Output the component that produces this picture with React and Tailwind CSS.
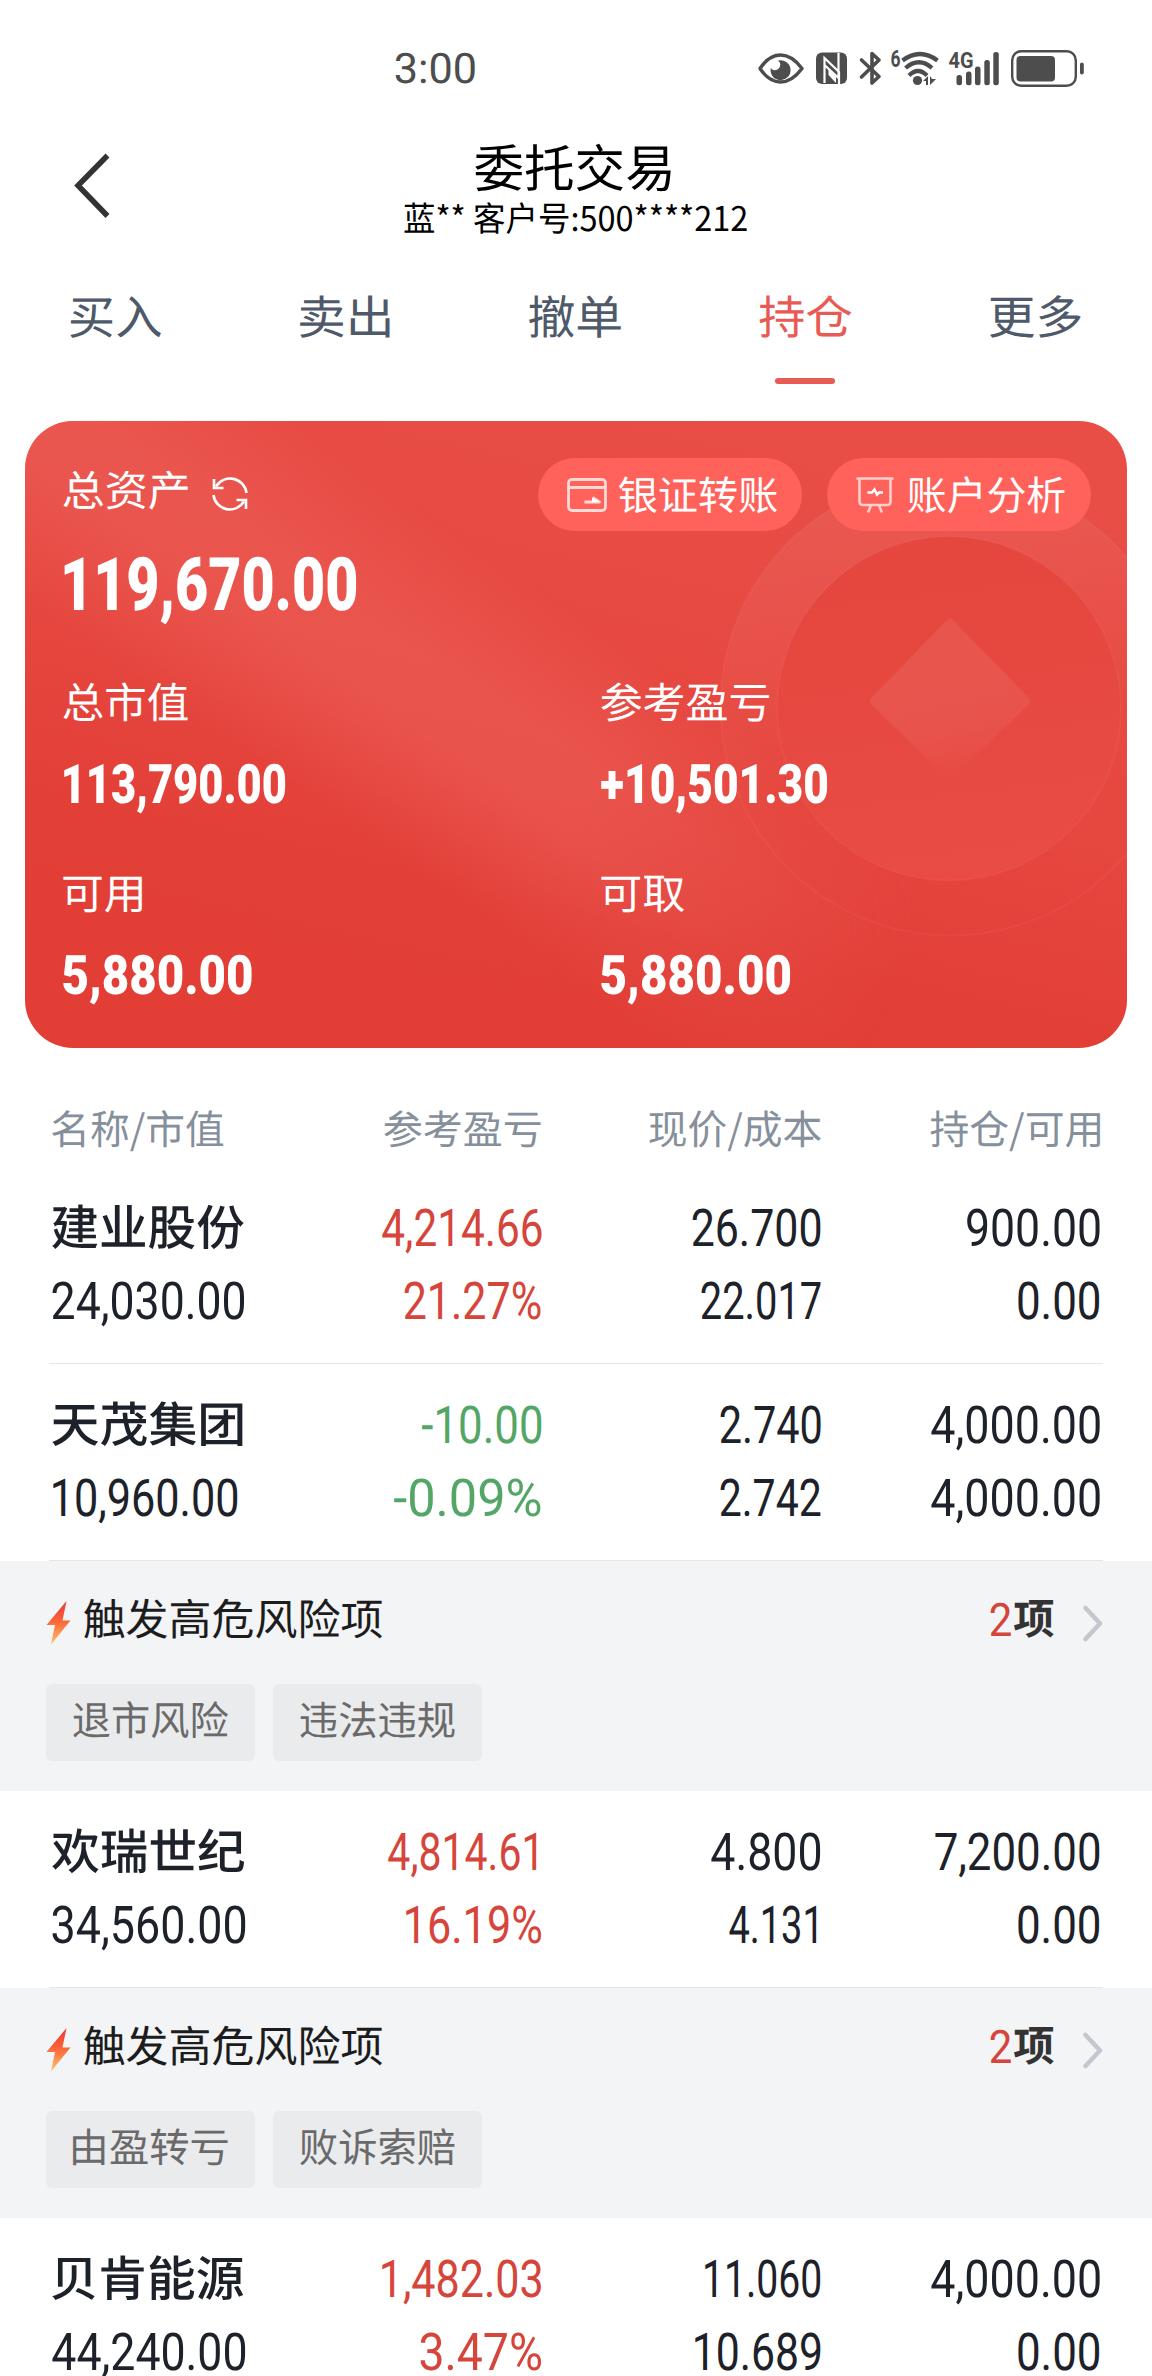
import { useLayoutEffect, useRef } from "react";

const CJK = /[\u4e00-\u9fff]/;

// One line of text, condensed or widened so that its visible glyphs span `w` pixels.
function Fit({ text, w, className = "" }) {
  const ref = useRef(null);
  useLayoutEffect(() => {
    const el = ref.current;
    const cs = getComputedStyle(el);
    const size = parseFloat(cs.fontSize);
    const ctx = document.createElement("canvas").getContext("2d");
    ctx.font = `${cs.fontWeight} ${size * 10}px ${cs.fontFamily}`;
    const m = ctx.measureText(text);
    const left = -m.actualBoundingBoxLeft / 10 - (text.startsWith("1") ? size * 0.025 : 0);
    const right = m.actualBoundingBoxRight / 10 + (text.endsWith("1") ? size * 0.13 : 0);
    const s = w / (right - left);
    const dy = CJK.test(text) ? "-0.06em" : "0.014em";
    el.style.transform = `translate(${-left * s}px, ${dy}) scaleX(${s})`;
  }, [text, w]);
  return (
    <span className={`block shrink-0 ${className}`} style={{ width: w }}>
      <span
        ref={ref}
        className={`block w-max origin-left whitespace-nowrap [text-rendering:geometricPrecision] ${
          CJK.test(text)
            ? "font-['Noto_Sans_CJK_SC',sans-serif]"
            : "font-[Roboto,'Noto_Sans_CJK_SC',sans-serif]"
        }`}
      >
        {text}
      </span>
    </span>
  );
}

function StatusIcons() {
  return (
    <svg className="overflow-visible" width="330" height="40" viewBox="757 48 330 40" fill="#4d4d4d">
      <path d="M760 67.5Q769 54 780.5 54T802 67.5Q792 81 780.5 81T760 67.5Z" fill="none" stroke="#4d4d4d" strokeWidth="3.4" strokeLinejoin="round" />
      <path d="M778 59.5a10 10 0 1 1-7.2 7.5 6 6 0 0 0 3.2 2.3 6.2 6.2 0 0 0 6.4-6 5.500 5.500 0 0 0-2.400-3.800Z" />
      <rect x="816" y="51.500" width="31" height="31.500" rx="6" />
      <path d="M824.500 82V57L839 71V83M838.500 52V77L824.500 64" fill="none" stroke="#fff" strokeWidth="2.200" />
      <path d="M828.500 68.500L836 76v6L828.500 74Z" fill="#fff" />
      <path d="M861.500 59L879 75.500 872 82V52.500L879 59 861.500 76" fill="none" stroke="#4d4d4d" strokeWidth="3.600" strokeLinejoin="round" strokeLinecap="round" />
      <text x="890.500" y="66" fontSize="23" fontWeight="700" fontFamily="Roboto, sans-serif" textLength="10" lengthAdjust="spacingAndGlyphs">6</text>
      <g fill="none" stroke="#4d4d4d" strokeWidth="4.200">
        <path d="M902.500 59.500Q920 46.500 937.500 59.500" />
        <path d="M905.500 67Q919 55.500 932 67" />
        <path d="M909 74.500Q918 65.500 927 74.500" />
      </g>
      <circle cx="917.500" cy="79.500" r="4.600" />
      <path d="M923 80l5-5v9h-2v-4ZM930 75v9l6-6h-4Z" />
      <text x="948.500" y="67" fontSize="22.500" fontWeight="700" fontFamily="Roboto, sans-serif" textLength="25" lengthAdjust="spacingAndGlyphs">4G</text>
      <rect x="956.500" y="74" width="5.500" height="10.300" rx="2.500" />
      <rect x="966" y="70.500" width="5.500" height="13.800" rx="2.500" />
      <rect x="975" y="65.500" width="5.500" height="18.800" rx="2.500" />
      <rect x="984.300" y="59" width="5.500" height="25.300" rx="2.500" />
      <rect x="993.300" y="51" width="5.500" height="33.300" rx="2.500" />
      <rect x="1012.200" y="50.200" width="63.600" height="34.600" rx="9" fill="none" stroke="#4d4d4d" strokeWidth="2.400" />
      <rect x="1016.500" y="55" width="38.500" height="25.500" rx="4" />
      <rect x="1080" y="61.500" width="3.800" height="12" rx="1.900" />
    </svg>
  );
}

function CardBackdrop() {
  return (
    <svg className="absolute inset-0" width="1102" height="627" viewBox="25 421 1102 627" aria-hidden="true">
      <defs>
        <linearGradient id="base" gradientUnits="userSpaceOnUse" x1="700" y1="421" x2="560" y2="1047">
          <stop offset="0" stopColor="#e84e46" />
          <stop offset="0.5" stopColor="#e6473f" />
          <stop offset="0.8" stopColor="#e23f37" />
          <stop offset="1" stopColor="#e23e36" />
        </linearGradient>
        <linearGradient id="beam" gradientUnits="userSpaceOnUse" x1="290" y1="790" x2="465" y2="535">
          <stop offset="0" stopColor="#ed625b" stopOpacity="0" />
          <stop offset="0.4" stopColor="#ed625b" stopOpacity="0.5" />
          <stop offset="0.62" stopColor="#ed625b" stopOpacity="0.5" />
          <stop offset="1" stopColor="#ed625b" stopOpacity="0" />
        </linearGradient>
        <linearGradient id="fade" gradientUnits="userSpaceOnUse" x1="430" y1="610" x2="930" y2="950">
          <stop offset="0" stopColor="#fff" />
          <stop offset="0.4" stopColor="#fff" />
          <stop offset="1" stopColor="#000" />
        </linearGradient>
        <mask id="beamMask">
          <rect x="25" y="421" width="1102" height="627" fill="url(#fade)" />
        </mask>
        <linearGradient id="ring" gradientUnits="userSpaceOnUse" x1="860" y1="480" x2="960" y2="880">
          <stop offset="0" stopColor="#fff" stopOpacity="0.065" />
          <stop offset="0.25" stopColor="#fff" stopOpacity="0.05" />
          <stop offset="0.7" stopColor="#fff" stopOpacity="0" />
        </linearGradient>
        <linearGradient id="disc" gradientUnits="userSpaceOnUse" x1="930" y1="537" x2="970" y2="880">
          <stop offset="0" stopColor="#e5463e" />
          <stop offset="1" stopColor="#e84c44" />
        </linearGradient>
        <linearGradient id="gem" gradientUnits="userSpaceOnUse" x1="940" y1="690" x2="958" y2="778">
          <stop offset="0" stopColor="#fff" stopOpacity="0.07" />
          <stop offset="0.45" stopColor="#fff" stopOpacity="0.055" />
          <stop offset="1" stopColor="#fff" stopOpacity="0" />
        </linearGradient>
      </defs>
      <rect x="25" y="421" width="1102" height="627" fill="url(#base)" />
      <rect x="25" y="421" width="1102" height="627" fill="url(#beam)" mask="url(#beamMask)" />
      <circle cx="950.500" cy="705.500" r="230" fill="url(#ring)" stroke="#fff" strokeOpacity="0.04" strokeWidth="2" />
      <circle cx="949" cy="708.500" r="172" fill="url(#disc)" stroke="#fff" strokeOpacity="0.04" strokeWidth="2" />
      <path d="M947 620q3-3 6 0l75 77q4 4 0 8l-75 73q-3 3-6 0l-75-73q-4-4 0-8Z" fill="url(#gem)" />
    </svg>
  );
}

const CardIcon = () => (
  <svg width="40" height="34" viewBox="0 0 40 34" fill="none" stroke="#ffd9d6" strokeWidth="2.800">
    <rect x="1.500" y="1.500" width="37" height="31" rx="3.500" />
    <path d="M2 9.500h36M17.500 24h15l-7-4.500" strokeLinejoin="round" />
    <path d="M25 19.500l8 4.500h-8Z" fill="#fff" stroke="none" />
  </svg>
);

const BoardIcon = () => (
  <svg width="38" height="38" viewBox="0 0 38 38" fill="none" stroke="#ffcfcc" strokeWidth="2.600">
    <path d="M0.500 2.500h37M3.500 3v22.500q0 3.500 3.500 3.500h24q3.500 0 3.500-3.500V3M15 29.500l-3 7M23 29.500l3 7" />
    <path d="M11.500 16.500h4.500l2.500-3 2.500 5 2-2h4" stroke="#fff" />
  </svg>
);

const RefreshIcon = () => (
  <svg width="36" height="36" viewBox="0 0 36 36" fill="none" stroke="#fff" strokeWidth="2.600">
    <path d="M34.500 17A16.500 16.500 0 0 0 4 10.500M1.500 19A16.500 16.500 0 0 0 32 25.500" />
    <path d="M2 3v9h9.500M34 33v-9h-9.500" />
  </svg>
);

const TABS = [
  { label: "买入", w: 91 },
  { label: "卖出", w: 90 },
  { label: "撤单", w: 92 },
  { label: "持仓", w: 93, active: true },
  { label: "更多", w: 91 },
];

const HEADERS = [
  ["名称/市值", 171.5],
  ["参考盈亏", 157],
  ["现价/成本", 172],
  ["持仓/可用", 170],
];

const STOCKS = [
  {
    name: ["建业股份", 192], value: ["24,030.00", 192.5], tone: "text-[#d5453b]",
    pairs: [[["4,214.66", 159.5], ["21.27%", 137]], [["26.700", 128.5], ["22.017", 120]], [["900.00", 133], ["0.00", 81.5]]],
  },
  {
    name: ["天茂集团", 190.5], value: ["10,960.00", 185.5], tone: "text-[#54a667]",
    pairs: [[["-10.00", 119.5], ["-0.09%", 147]], [["2.740", 101], ["2.742", 100.5]], [["4,000.00", 169], ["4,000.00", 169]]],
    risks: ["退市风险", "违法违规"],
  },
  {
    name: ["欢瑞世纪", 192], value: ["34,560.00", 193.5], tone: "text-[#d5453b]",
    pairs: [[["4,814.61", 153.5], ["16.19%", 136.5]], [["4.800", 109.5], ["4.131", 92]], [["7,200.00", 164.5], ["0.00", 81.5]]],
    risks: ["由盈转亏", "败诉索赔"],
  },
  {
    name: ["贝肯能源", 191.5], value: ["44,240.00", 193.5], tone: "text-[#d5453b]",
    pairs: [[["1,482.03", 160], ["3.47%", 121.5]], [["11.060", 116.5], ["10.689", 126.5]], [["4,000.00", 169], ["0.00", 81.5]]],
  },
];

const COLS = "grid grid-cols-[250px_239.5px_279.5px_279px] pl-[51.500px]";

function StockRow({ stock }) {
  return (
    <div className="h-[197px]">
      <div className={`${COLS} h-[196px] pt-6 text-[52px] leading-[73px] text-[#1d2129]`}>
        <div>
          <Fit text={stock.name[0]} w={stock.name[1]} className="text-[48px] font-medium" />
          <Fit text={stock.value[0]} w={stock.value[1]} />
        </div>
        {stock.pairs.map((pair, i) => (
          <div key={i} className={`flex flex-col items-end ${i === 0 ? stock.tone : ""}`}>
            {pair.map(([t, w], j) => (
              <Fit key={j} text={t} w={w} />
            ))}
          </div>
        ))}
      </div>
      <div className="mx-[49px] h-px bg-[#e6e6e8]" />
    </div>
  );
}

function RiskPanel({ risks }) {
  return (
    <section className="h-[230px] bg-[#f3f4f6] pt-7">
      <div className="flex h-[62px] items-center pr-[49px] pl-[46px] leading-[62px]">
        <svg className="mt-1.5 shrink-0" width="25" height="44" viewBox="0 0 25 44">
          <defs>
            <linearGradient id="bolt" x1="0" y1="0" x2="0" y2="1">
              <stop offset="0" stopColor="#e8383d" />
              <stop offset="0.45" stopColor="#fb6237" />
              <stop offset="1" stopColor="#ffc46b" />
            </linearGradient>
          </defs>
          <path d="M20.500 0L0.500 24h8.500L5 43.500 24.500 19.500h-8Z" fill="url(#bolt)" />
        </svg>
        <Fit text="触发高危风险项" w={298} className="ml-[13px] text-[43px] text-[#1c1c1c]" />
        <div className="ml-auto flex items-center">
          <Fit text="2" w={21} className="text-[46px] text-[#d5453b]" />
          <Fit text="项" w={40} className="ml-[3px] text-[42px] font-bold text-[#333]" />
          <svg className="mt-1.5 ml-7" width="21" height="37" viewBox="0 0 21 37" fill="none">
            <path d="M3.500 3L18 18.500 3.500 34" stroke="#c5c7cf" strokeWidth="4.500" strokeLinecap="round" strokeLinejoin="round" />
          </svg>
        </div>
      </div>
      <div className="mt-[33px] flex gap-[18px] pl-[46px]">
        {risks.map((r) => (
          <div key={r} className="flex h-[77px] w-[209px] justify-center rounded-md bg-[#eaebed] text-[40px] leading-[73px] text-[#6a6a6a]">
            <Fit text={r} w={155} />
          </div>
        ))}
      </div>
    </section>
  );
}

function Metric({ label, lw, value, vw }) {
  return (
    <div className="leading-[80px]">
      <Fit text={label} w={lw} className="text-[42px]" />
      <Fit text={value} w={vw} className="text-[54.500px] font-black" />
    </div>
  );
}

function Pill({ icon, label, w, gap }) {
  return (
    <div className={`flex h-[73px] w-[264px] items-center rounded-full bg-[#ff625a] pl-[29px] leading-[70px] ${gap}`}>
      {icon}
      <Fit text={label} w={w} className="text-[40px]" />
    </div>
  );
}

export default function App() {
  return (
    <div className="h-[2376px] w-[1152px] overflow-hidden bg-white font-['Noto_Sans_CJK_SC',sans-serif]">
      <div className="flex h-[134px] items-center pt-1 pl-[395px] text-[#4d4d4d]">
        <Fit text="3:00" w={80} className="text-[42px] leading-[62px]" />
        <div className="ml-[282px]">
          <StatusIcons />
        </div>
      </div>

      <header className="grid h-[112px] grid-cols-[199px_752px_201px] text-black">
        <svg className="mt-[18px] ml-[73px]" width="40" height="68" viewBox="0 0 40 68" fill="none">
          <path d="M34.500 3.500L5 33.500 34.500 64" stroke="#333" strokeWidth="5.500" />
        </svg>
        <div className="flex flex-col items-center pt-[9px]">
          <Fit text="委托交易" w={196} className="mr-1 text-[51px] leading-[51px]" />
          <Fit text="蓝** 客户号:500****212" w={343} className="text-[34px] leading-[49px]" />
        </div>
      </header>

      <nav className="grid h-[138px] grid-cols-[repeat(5,230px)] pt-3">
        {TABS.map((t) => (
          <div key={t.label} className={`flex flex-col items-center text-[46px] leading-[120px] ${t.active ? "text-[#e85b55]" : "text-[#4e5969]"}`}>
            <Fit text={t.label} w={t.w} />
            {t.active && <div className="h-1.5 w-[60px] rounded-full bg-[#e85b55]" />}
          </div>
        ))}
      </nav>

      <section className="relative mx-[25px] mt-[37px] h-[627px] overflow-hidden rounded-[48px] text-white">
        <CardBackdrop />
        <div className="relative pt-[37px] pl-[38px]">
          <div className="flex h-[73px]">
            <Fit text="总资产" w={125} className="text-[42px] leading-[68px]" />
            <div className="mt-[18px] ml-[23.500px]">
              <RefreshIcon />
            </div>
            <div className="ml-[290px] flex gap-[25px]">
              <Pill icon={<CardIcon />} label="银证转账" w={158} gap="gap-3" />
              <Pill icon={<BoardIcon />} label="账户分析" w={157} gap="gap-[14px]" />
            </div>
          </div>
          <Fit text="119,670.00" w={293.5} className="text-[74px] leading-[107px] font-black" />
          <div className="mt-[26px] grid grid-cols-[538px_1fr] gap-y-[31px]">
            <Metric label="总市值" lw={125} value="113,790.00" vw={222.5} />
            <Metric label="参考盈亏" lw={168.5} value="+10,501.30" vw={226.5} />
            <Metric label="可用" lw={79} value="5,880.00" vw={189} />
            <Metric label="可取" lw={83} value="5,880.00" vw={189.5} />
          </div>
        </div>
      </section>

      <div className={`${COLS} mt-[43px] h-[76px] text-[40px] leading-[76px] text-[#86909c]`}>
        {HEADERS.map(([t, w], i) => (
          <div key={t} className={`flex ${i ? "justify-end" : ""}`}>
            <Fit text={t} w={w} />
          </div>
        ))}
      </div>

      {STOCKS.map((s) => (
        <div key={s.name[0]}>
          <StockRow stock={s} />
          {s.risks && <RiskPanel risks={s.risks} />}
        </div>
      ))}
    </div>
  );
}
